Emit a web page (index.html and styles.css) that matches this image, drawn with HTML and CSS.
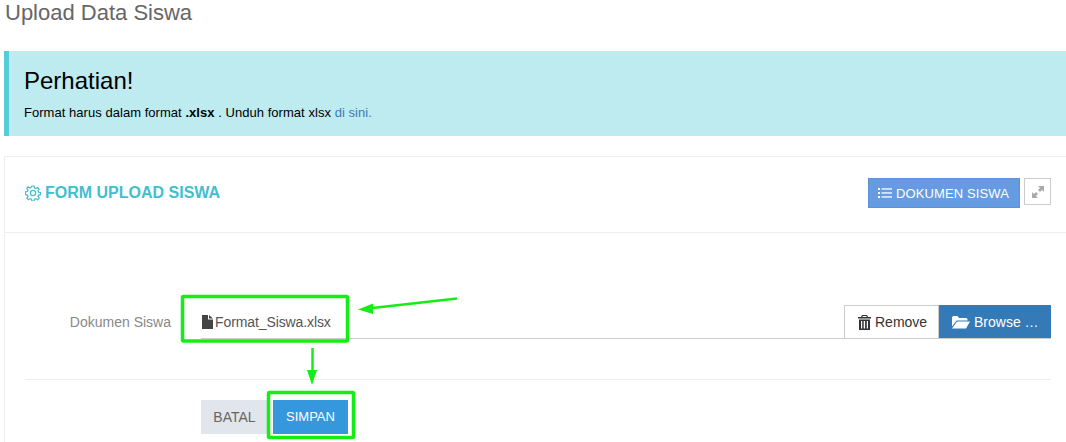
FILE: index.html
```html
<!DOCTYPE html>
<html lang="en">
<head>
    <meta charset="UTF-8">
    <meta name="viewport" content="width=device-width, initial-scale=1.0">
    <title>Upload Data Siswa</title>
    <link rel="stylesheet" href="styles.css">
</head>
<body>
    <div class="page">
        <h3 class="page-title">Upload Data Siswa</h3>

        <div class="note">
            <h4>Perhatian!</h4>
            <p>Format harus dalam format <b>.xlsx</b> . Unduh format xlsx <a href="#">di sini.</a></p>
        </div>

        <div class="portlet">
            <div class="portlet-head">
                <div class="portlet-title">
                    <svg class="icon-gear" viewBox="0 0 16 16" width="16" height="16" fill="none" stroke="#3fbfd0" stroke-width="1.2">
                        <path d="M6.900 1h2.200l.4 2 1.300.6 1.800-1.100 1.500 1.500-1.100 1.800.6 1.300 2 .4v2.200l-2 .4-.6 1.300 1.100 1.800-1.500 1.500-1.800-1.100-1.300.6-.4 2H6.900l-.4-2-1.300-.6-1.800 1.100-1.500-1.500 1.100-1.800-.6-1.300-2-.4V6.900l2-.4.6-1.300-1.100-1.800L3 1.900l1.800 1.100 1.300-.6z"/>
                        <circle cx="8" cy="8" r="2.600"/>
                    </svg>
                    <span>FORM UPLOAD SISWA</span>
                </div>
                <div class="portlet-actions">
                    <a class="btn-doc" href="#">
                        <svg viewBox="0 0 14 12" width="14" height="12" fill="#fff">
                            <rect x="0" y="1" width="2" height="2"/>
                            <rect x="0" y="5" width="2" height="2"/>
                            <rect x="0" y="9" width="2" height="2"/>
                            <rect x="3.500" y="1.300" width="10.500" height="1.300"/>
                            <rect x="3.500" y="5.300" width="10.500" height="1.300"/>
                            <rect x="3.500" y="9.300" width="10.500" height="1.300"/>
                        </svg>
                        DOKUMEN SISWA
                    </a>
                    <a class="btn-expand" href="#">
                        <svg viewBox="0 0 12 12" width="12" height="12" fill="#aaa">
                            <path d="M12 0v6l-2-2-2 2-2-2 2-2-2-2z"/>
                            <path d="M0 12V6l2 2 2-2 2 2-2 2 2 2z"/>
                        </svg>
                    </a>
                </div>
            </div>

            <div class="portlet-body">
                <div class="form-row">
                    <label class="form-label">Dokumen Siswa</label>
                    <div class="file-input">
                        <div class="file-caption">
                            <svg viewBox="0 0 11 14" width="11" height="14" fill="#444">
                                <path d="M0 0h6v4.500h5V14H0z"/>
                                <path d="M7 0l4 3.500H7z"/>
                            </svg>
                            <span>Format_Siswa.xlsx</span>
                        </div>
                        <a class="btn-remove" href="#">
                            <svg viewBox="0 0 13 15" width="13" height="15" fill="#333">
                                <path d="M4 0h5l1 2h3v1.500H0V2h3zM4.800 1L4.300 2h4.400l-.5-1z"/>
                                <path d="M1 4.500h11V15H1zM3 6v7.500h1.200V6zm2.700 0v7.500h1.400V6zM8.800 6v7.500H10V6z" fill-rule="evenodd"/>
                            </svg>
                            Remove
                        </a>
                        <a class="btn-browse" href="#">
                            <svg viewBox="0 0 18 14" width="18" height="14" fill="#fff">
                                <path d="M0 2.500Q0 1 1.500 1h4l1.500 2h7q1.500 0 1.500 1.500V5.500H4.500L0 11.500z"/>
                                <path d="M5 6.500h13l-4 7H0z"/>
                            </svg>
                            Browse …
                        </a>
                    </div>
                </div>
                <div class="form-actions">
                    <a class="btn-cancel" href="#">BATAL</a>
                    <a class="btn-save" href="#">SIMPAN</a>
                </div>
            </div>
        </div>

        <!-- green marks drawn over the screenshot -->
        <svg class="marks" width="1066" height="442" fill="none">
            <rect x="182.500" y="296.500" width="165" height="44.500" stroke="#14ee14" stroke-width="3.500" rx="1"/>
            <rect x="268.500" y="392.500" width="85" height="45" stroke="#14ee14" stroke-width="3.500" rx="1"/>
            <path d="M457 298.500L368 308.500" stroke="#14ee14" stroke-width="2.500"/>
            <path d="M358 309.500L373 303.500L373 314z" fill="#14ee14"/>
            <path d="M312.500 348V372" stroke="#14ee14" stroke-width="2.500"/>
            <path d="M312 385L307 370H317z" fill="#14ee14"/>
        </svg>
    </div>
</body>
</html>
```

FILE: styles.css
```css
html, body {
    margin: 0;
    padding: 0;
    height: 442px;
    overflow: hidden;
    background: #fff;
}

body {
    font-family: "Liberation Sans", Arial, sans-serif;
    font-size: 14px;
    color: #333;
}

a {
    text-decoration: none;
}

.page {
    position: relative;
    width: 1100px;
    padding-left: 4px;
    box-sizing: border-box;
}

.page-title {
    margin: 0 0 0 1px;
    height: 51px;
    font-size: 22px;
    font-weight: 400;
    line-height: 26px;
    color: #666;
}

.note {
    height: 85px;
    box-sizing: border-box;
    padding: 16px 15px 0 15px;
    background: #bdebf0;
    border-left: 5px solid #57ccd6;
    color: #000;
}

.note h4 {
    margin: 0;
    font-size: 24px;
    font-weight: 400;
    line-height: 27px;
}

.note p {
    margin: 10px 0 0;
    font-size: 13px;
    line-height: 18px;
    letter-spacing: .04px;
}

.note a {
    color: #3f78b5;
}

.portlet {
    margin-top: 20px;
    border: 1px solid #eee;
    border-right: 0;
    border-bottom: 0;
    padding-bottom: 8px;
}

.portlet-head {
    display: flex;
    align-items: center;
    height: 75px;
    padding-left: 20px;
    border-bottom: 1px solid #eee;
}

.portlet-title {
    display: flex;
    align-items: center;
    gap: 4px;
    padding-bottom: 3px;
    font-size: 16px;
    font-weight: 700;
    color: #3fbfd0;
}

.portlet-actions {
    display: flex;
    align-items: flex-start;
    gap: 4px;
    align-self: flex-start;
    margin-top: 21px;
    margin-left: auto;
    margin-right: 49px;
}

.btn-doc {
    display: flex;
    align-items: center;
    gap: 4px;
    height: 30px;
    width: 152px;
    box-sizing: border-box;
    padding: 0 0 0 9px;
    background: #659be0;
    border: 1px solid #5b93d8;
    color: #fff;
    font-size: 13px;
    letter-spacing: .12px;
}

.btn-expand {
    display: flex;
    align-items: center;
    justify-content: center;
    width: 27px;
    height: 27px;
    box-sizing: border-box;
    border: 1px solid #ccc;
}

.portlet-body {
    padding: 72px 49px 0 20px;
}

.form-row {
    display: flex;
    align-items: flex-end;
    padding-bottom: 40px;
    border-bottom: 1px solid #eee;
}

.form-label {
    width: 146px;
    text-align: right;
    line-height: 34px;
    color: #888;
    font-size: 14px;
}

.file-input {
    display: flex;
    flex: 1;
    height: 34px;
    box-sizing: border-box;
    margin-left: 30px;
    border-bottom: 1px solid #ccc;
}

.file-caption {
    display: flex;
    align-items: center;
    gap: 2px;
    flex: 1;
    padding-left: 1px;
    color: #555;
    font-size: 14px;
    letter-spacing: -.1px;
}

.btn-remove, .btn-browse {
    display: flex;
    align-items: center;
    gap: 4px;
    height: 33px;
    box-sizing: border-box;
    font-size: 14px;
}

.btn-remove {
    width: 95px;
    padding-left: 13px;
    background: #fff;
    border: 1px solid #ccc;
    border-bottom: 0;
    color: #333;
}

.btn-browse {
    width: 112px;
    padding-left: 13px;
    background: #337ab7;
    color: #fff;
}

.form-actions {
    display: flex;
    margin-top: 20px;
    margin-left: 176px;
}

.btn-cancel, .btn-save {
    height: 34px;
    line-height: 34px;
    box-sizing: border-box;
    text-align: center;
}

.btn-cancel {
    width: 67px;
    background: #e1e5ec;
    color: #666;
    font-size: 14px;
}

.btn-save {
    width: 75px;
    margin-left: 5px;
    font-size: 13px;
    background: #3598dc;
    color: #fff;
}

.marks {
    position: absolute;
    left: 0;
    top: 0;
}
```
